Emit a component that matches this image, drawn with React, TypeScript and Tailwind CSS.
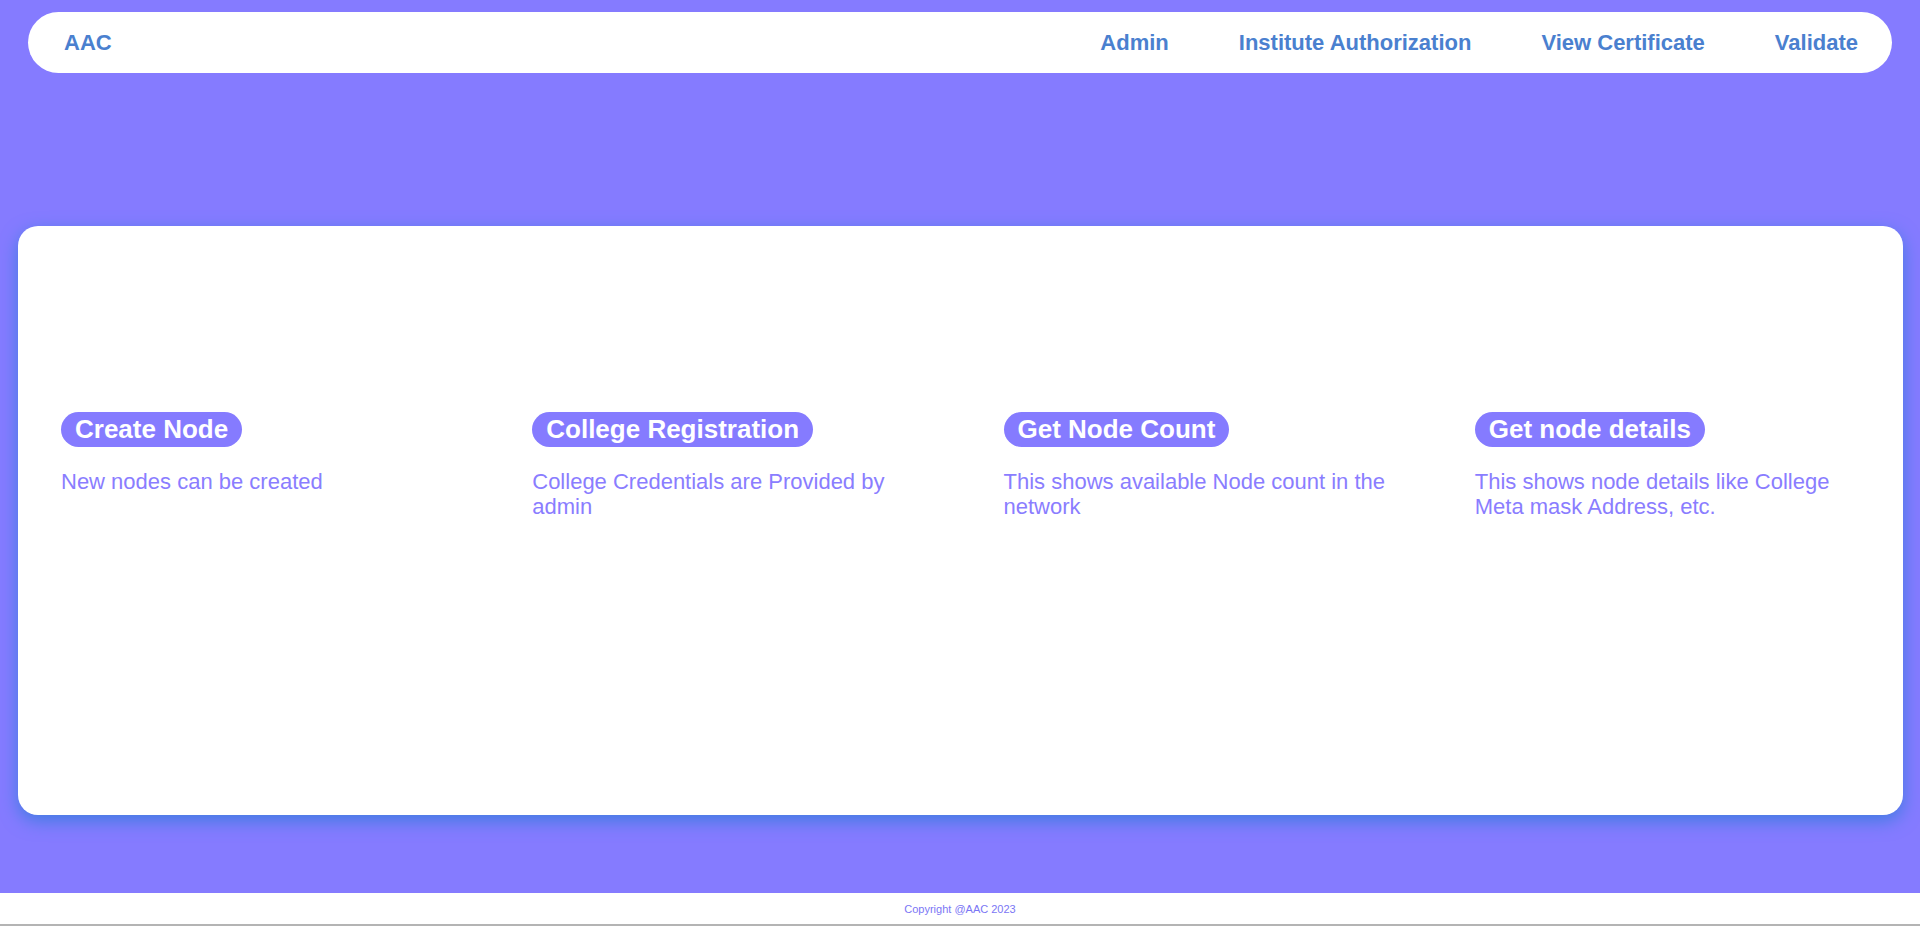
import React from 'react';

const links = ['Admin', 'Institute Authorization', 'View Certificate', 'Validate'];

const features = [
  { title: 'Create Node', text: 'New nodes can be created' },
  { title: 'College Registration', text: 'College Credentials are Provided by admin' },
  { title: 'Get Node Count', text: 'This shows available Node count in the network' },
  { title: 'Get node details', text: 'This shows node details like College Meta mask Address, etc.' },
];

const App: React.FC = () => {
  return (
    <div className="h-[926px] overflow-hidden flex flex-col bg-[#857bff] font-['Liberation_Sans',Arial,sans-serif]">
      {/* Navbar */}
      <nav className="mt-[12px] mx-[28px] h-[61px] shrink-0 bg-white rounded-full flex items-center justify-between pl-[36px] pr-[34px]">
        <span className="text-[22px] font-bold text-[#4a80cf]">AAC</span>
        <div className="flex items-center gap-[70px]">
          {links.map(link => (
            <a key={link} className="text-[22px] font-bold text-[#4a80cf] cursor-pointer">
              {link}
            </a>
          ))}
        </div>
      </nav>

      {/* Feature card */}
      <div className="mt-[153px] ml-[18px] mr-[17px] h-[589px] shrink-0 bg-white rounded-[20px] shadow-[0_6px_18px_rgba(64,124,226,1)] pt-[186px]">
        <div className="grid grid-cols-4">
          {features.map(item => (
            <div key={item.title} className="pl-[43px] pr-[30px]">
              <h2 className="inline-block bg-[#857bff] text-white font-bold text-[26px] leading-[29px] px-[14px] py-[3px] rounded-full">
                {item.title}
              </h2>
              <p className="mt-[22px] text-[22px] leading-[25.3px] text-[#8a7dff]">{item.text}</p>
            </div>
          ))}
        </div>
      </div>

      {/* Footer */}
      <footer className="mt-auto h-[33px] shrink-0 bg-white border-b-2 border-[#b4b4b4] flex items-center justify-center pt-[2px]">
        <span className="text-[11px] text-[#7b76f5]">Copyright @AAC 2023</span>
      </footer>
    </div>
  );
};

export default App;
